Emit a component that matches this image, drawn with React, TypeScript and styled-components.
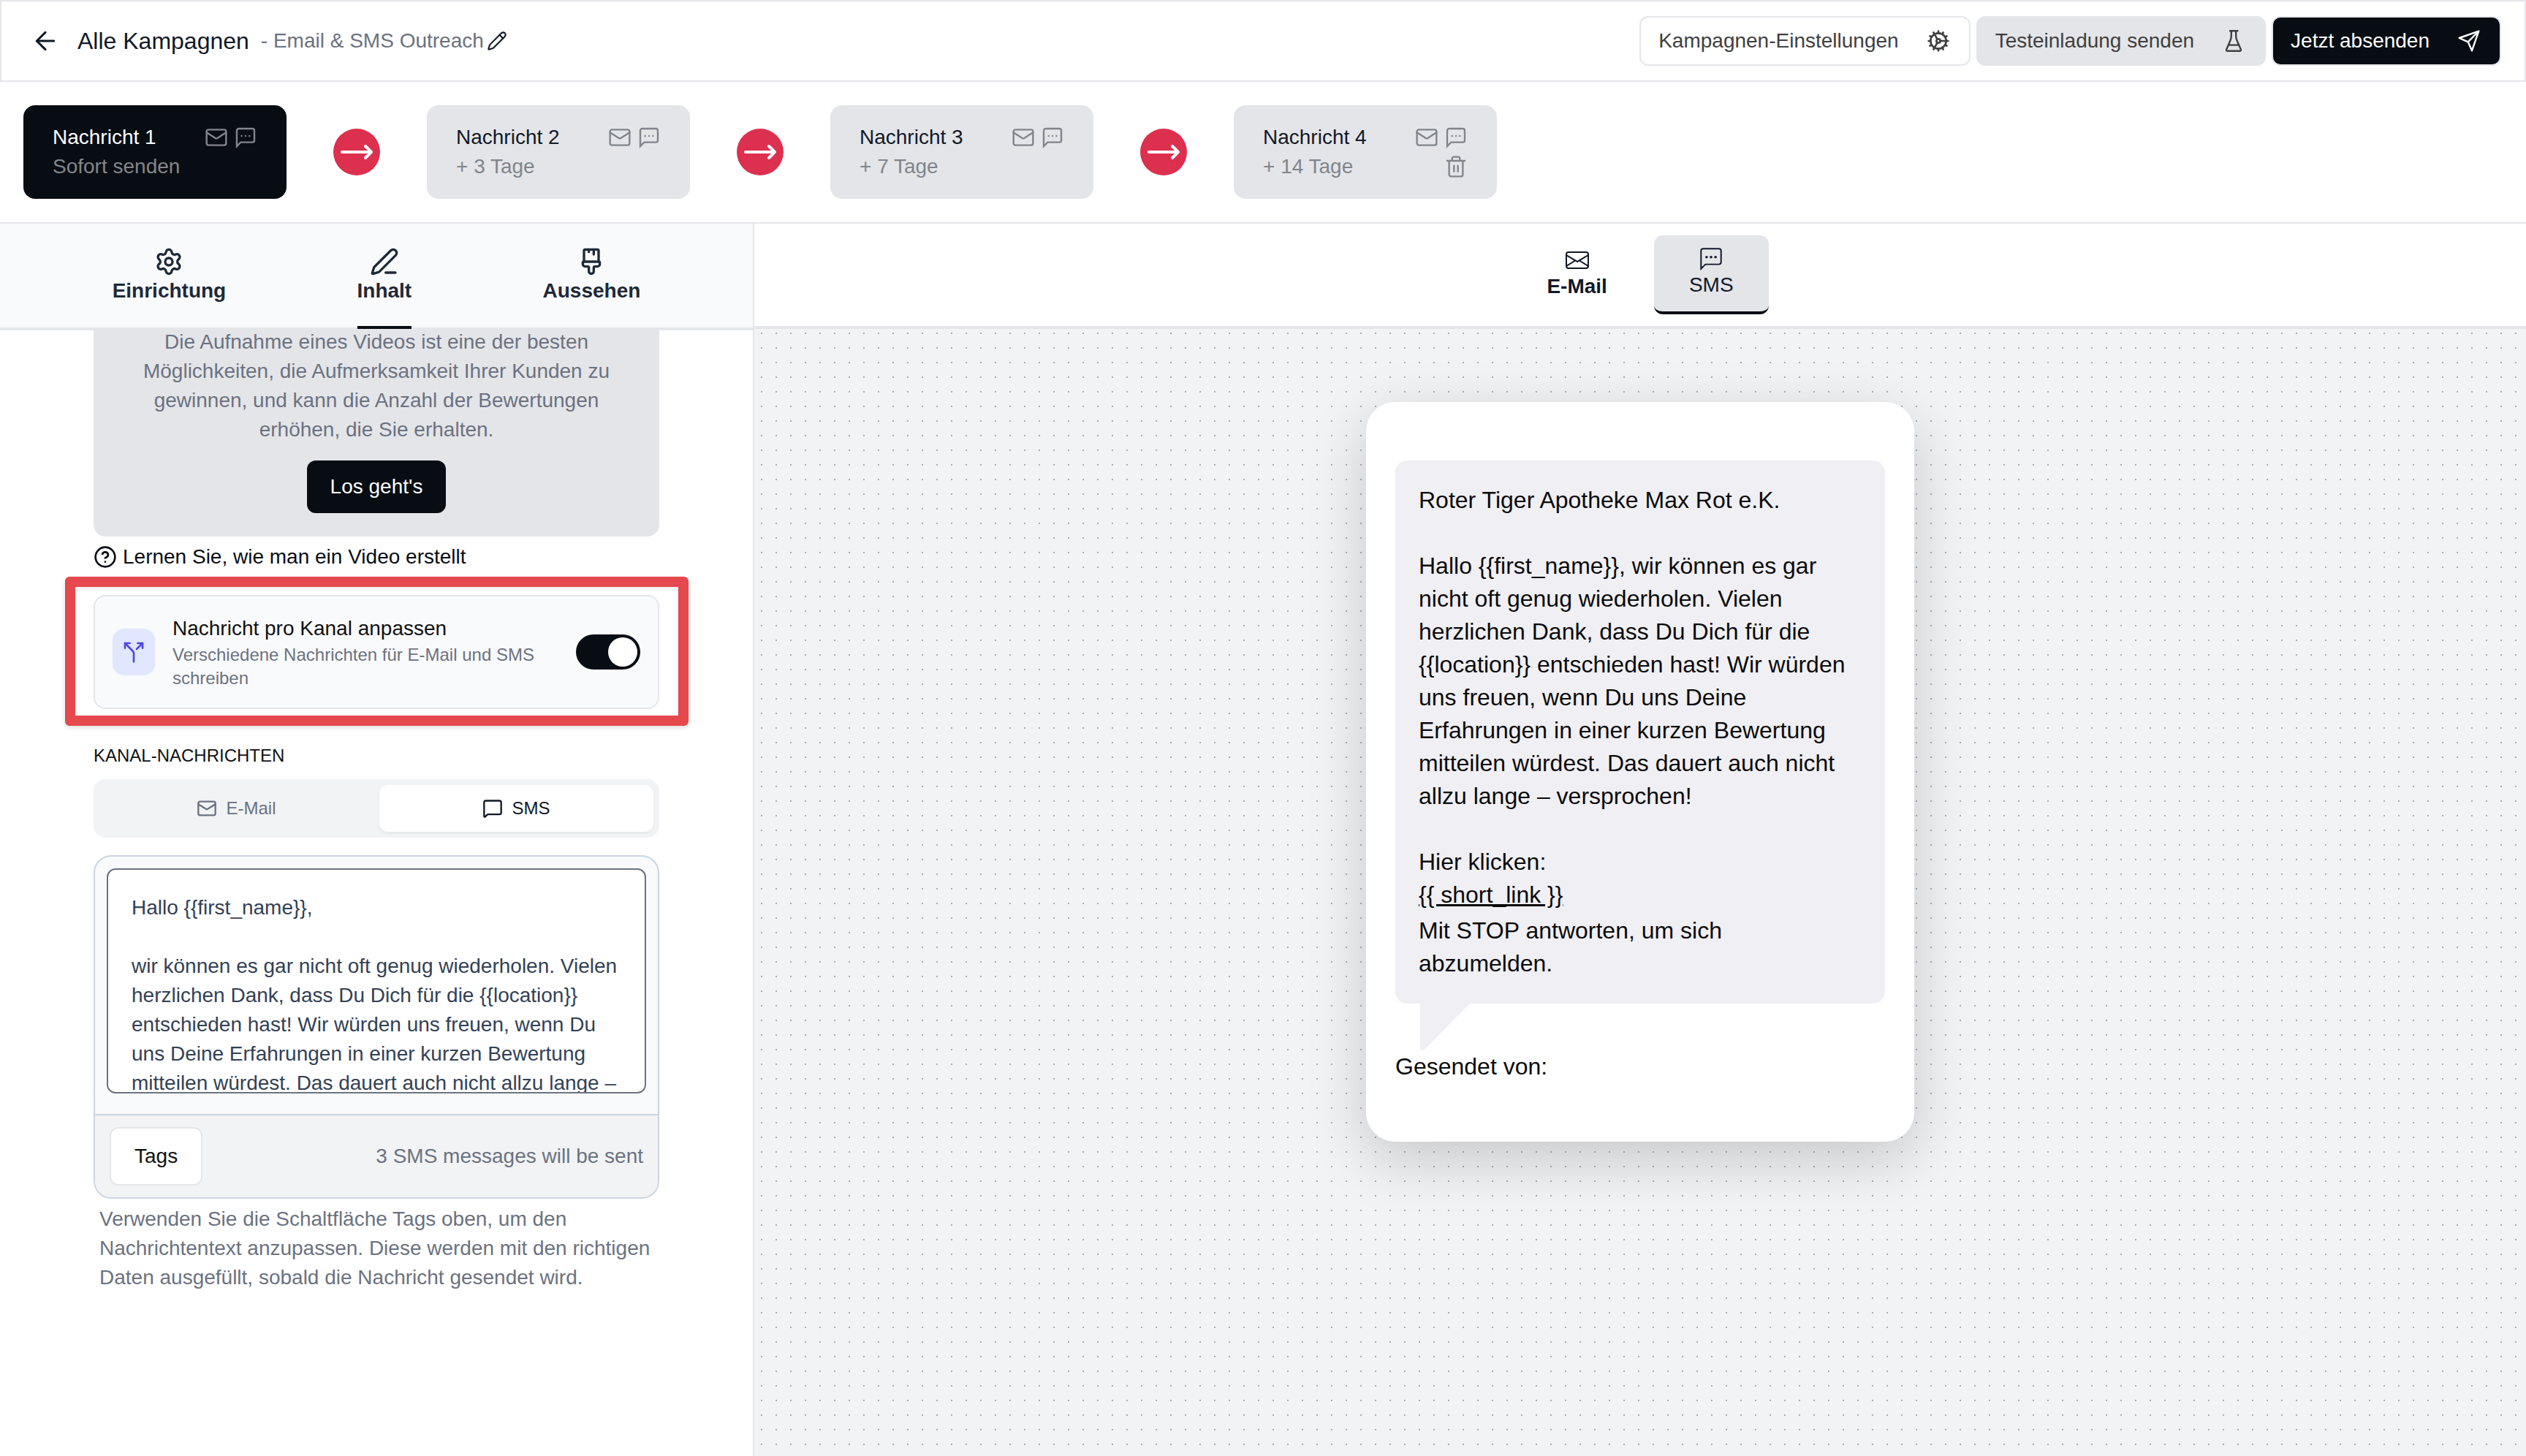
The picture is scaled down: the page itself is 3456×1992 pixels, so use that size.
import React, { useState } from "react";
import styled, { createGlobalStyle, css } from "styled-components";
import {
  ArrowLeft,
  CircleHelp,
  Cog,
  Mail,
  MessageSquare,
  PaintbrushVertical,
  Pencil,
  PenLine,
  Settings,
  Split,
} from "lucide-react";
import { BsEnvelope } from "react-icons/bs";

const color = {
  ink: "#080d14",
  text: "#111827",
  slate: "#1f2937",
  muted: "#6b7280",
  line: "#e5e6ea",
  fill: "#e4e5e9",
  soft: "#f2f3f5",
  pale: "#f9fafc",
  editorLine: "#cbd5e1",
  accent: "#dc304e",
  mark: "#e5484d",
};

const GlobalStyle = createGlobalStyle`
  *, *::before, *::after { box-sizing: border-box; }
  body {
    margin: 0;
    background: #fff;
    color: ${color.text};
    font-family: "Liberation Sans", Arial, Helvetica, sans-serif;
    font-size: 28px;
    line-height: 40px;
  }
  button, textarea, input { font: inherit; color: inherit; margin: 0; }
  button { background: none; border: 0; padding: 0; cursor: pointer; }
  p, h1, h2, h3 { margin: 0; font-size: inherit; font-weight: inherit; }
  svg { display: block; flex: none; }
`;

/* ---------- shared ---------- */

const Page = styled.div`
  display: flex;
  flex-direction: column;
  height: 100vh;
  overflow: hidden;
`;

const Button = styled.button<{ $tone: "plain" | "grey" | "dark" }>`
  display: flex;
  align-items: center;
  gap: 36px;
  height: 68px;
  padding: 0 24px;
  border: 2px solid ${color.line};
  border-radius: 12px;
  color: #404040;
  background: #fff;
  white-space: nowrap;
  ${(p) => p.$tone === "grey" && css`background: ${color.fill}; border-color: ${color.fill};`}
  ${(p) => p.$tone === "dark" && css`background: ${color.ink}; color: #fff;`}
`;

const IconSlot = styled.span`
  display: grid;
  place-items: center;
  width: 36px;
  height: 36px;
`;

/* ---------- header ---------- */

const Header = styled.header`
  display: flex;
  align-items: center;
  justify-content: space-between;
  flex: none;
  height: 112px;
  padding: 0 32px 0 40px;
  border: 2px solid ${color.line};
`;

const Crumbs = styled.div`
  display: flex;
  align-items: center;
  gap: 16px;
`;

const BackLink = styled.a`
  display: flex;
  align-items: center;
  gap: 24px;
  color: ${color.text};
  font-size: 32px;
  text-decoration: none;
`;

const CampaignName = styled.div`
  display: flex;
  align-items: center;
  gap: 4px;
  color: ${color.muted};
`;

const EditName = styled.button`
  color: ${color.text};
`;

const Actions = styled.div`
  display: flex;
  gap: 8px;
`;

/* ---------- message steps ---------- */

const Steps = styled.nav`
  display: flex;
  align-items: center;
  gap: 64px;
  flex: none;
  padding: 32px;
  border-bottom: 2px solid ${color.line};
`;

const StepCard = styled.div<{ $active: boolean }>`
  display: flex;
  justify-content: space-between;
  width: 360px;
  padding: 24px 40px;
  border-radius: 16px;
  background: ${(p) => (p.$active ? color.ink : color.fill)};
  color: ${(p) => (p.$active ? "#84868a" : "#80858c")};
`;

const StepButton = styled.button<{ $active: boolean }>`
  text-align: left;
  strong {
    display: block;
    font-weight: 400;
    color: ${(p) => (p.$active ? "#fff" : color.text)};
  }
`;

const StepIcons = styled.div`
  display: flex;
  flex-direction: column;
  align-items: flex-end;
  gap: 8px;
  padding-top: 4px;
`;

const IconPair = styled.div`
  display: flex;
  gap: 8px;
`;

const StepArrow = styled.span`
  display: grid;
  place-items: center;
  width: 64px;
  height: 64px;
  border-radius: 50%;
  background: ${color.accent};
  color: #fff;
`;

/* ---------- workspace ---------- */

const Workspace = styled.main`
  display: grid;
  grid-template-columns: 1032px minmax(0, 1fr);
  flex: 1;
  min-height: 0;
`;

const Sidebar = styled.section`
  display: flex;
  flex-direction: column;
  min-height: 0;
  border-right: 2px solid ${color.line};
`;

const TabBar = styled.div`
  display: flex;
  justify-content: space-around;
  flex: none;
  padding: 0 64px;
  background: ${color.pale};
  border-bottom: 4px solid ${color.line};
`;

const Tab = styled.button<{ $active: boolean }>`
  display: flex;
  flex-direction: column;
  align-items: center;
  margin-bottom: -2px;
  padding: 32px 0 28px;
  border-bottom: 4px solid ${(p) => (p.$active ? color.ink : "transparent")};
  color: ${color.slate};
  font-weight: 700;
`;

const SidebarBody = styled.div`
  flex: 1;
  min-height: 0;
  padding: 0 128px;
  overflow: hidden;
`;

const VideoCard = styled.div`
  display: flex;
  flex-direction: column;
  align-items: center;
  gap: 22px;
  margin-top: -40px;
  padding: 36px 56px 32px;
  border-radius: 16px;
  background: ${color.fill};
  color: ${color.muted};
  text-align: center;
`;

const StartButton = styled.button`
  height: 72px;
  padding: 0 32px;
  border-radius: 12px;
  background: ${color.ink};
  color: #fff;
`;

const HelpLink = styled.a`
  display: flex;
  align-items: center;
  gap: 8px;
  margin-top: 8px;
  color: ${color.ink};
  text-decoration: none;
`;

const Highlight = styled.div`
  position: relative;
  margin-top: 32px;
  &::after {
    content: "";
    position: absolute;
    inset: -25px -40px -23px -39px;
    border: 14px solid ${color.mark};
    border-radius: 6px;
    box-shadow: 0 2px 6px rgba(0, 0, 0, 0.15), inset 0 2px 6px rgba(0, 0, 0, 0.1);
    pointer-events: none;
  }
`;

const ToggleCard = styled.label`
  display: flex;
  align-items: center;
  gap: 24px;
  padding: 24px;
  border: 2px solid ${color.line};
  border-radius: 16px;
  background: ${color.pale};
`;

const Badge = styled.span`
  display: grid;
  place-items: center;
  flex: none;
  width: 58px;
  height: 64px;
  border-radius: 16px;
  background: #e0e7ff;
  color: #4f46e5;
`;

const ToggleText = styled.span`
  flex: 1;
  color: #111;
  small {
    display: block;
    color: ${color.muted};
    font-size: 24px;
    line-height: 32px;
  }
`;

const Switch = styled.input`
  appearance: none;
  flex: none;
  width: 88px;
  height: 48px;
  padding: 4px;
  border-radius: 24px;
  background: ${color.muted};
  &::before {
    content: "";
    display: block;
    width: 40px;
    height: 40px;
    border-radius: 50%;
    background: #fff;
  }
  &:checked { background: ${color.ink}; }
  &:checked::before { margin-left: auto; }
`;

const SectionLabel = styled.h2`
  margin: 48px 0 16px;
  color: #111;
  font-size: 24px;
  line-height: 32px;
  text-transform: uppercase;
`;

const Segments = styled.div`
  display: grid;
  grid-template-columns: 1fr 1fr;
  gap: 8px;
  padding: 8px;
  border-radius: 16px;
  background: ${color.soft};
`;

const Segment = styled.button<{ $active: boolean }>`
  display: flex;
  align-items: center;
  justify-content: center;
  gap: 12px;
  height: 64px;
  border-radius: 12px;
  color: ${color.muted};
  font-size: 24px;
  ${(p) =>
    p.$active &&
    css`
      background: #fff;
      color: ${color.text};
      box-shadow: 0 2px 4px rgba(0, 0, 0, 0.06);
    `}
`;

const Editor = styled.div`
  margin-top: 24px;
  border: 2px solid ${color.editorLine};
  border-radius: 24px;
  background: ${color.pale};
  overflow: hidden;
`;

const EditorBody = styled.div`
  padding: 16px 16px 28px;
  border-bottom: 2px solid ${color.editorLine};
`;

const MessageInput = styled.textarea`
  display: block;
  width: 100%;
  height: 308px;
  padding: 32px;
  border: 2px solid ${color.muted};
  border-radius: 12px;
  outline: 0;
  background: #fff;
  color: #334155;
  resize: none;
  overflow: hidden;
`;

const EditorFooter = styled.div`
  display: flex;
  align-items: center;
  justify-content: space-between;
  padding: 16px 20px;
  background: ${color.soft};
  color: ${color.muted};
`;

const TagsButton = styled.button`
  height: 80px;
  padding: 0 32px;
  border: 2px solid ${color.line};
  border-radius: 12px;
  background: #fff;
  color: #111;
`;

const Hint = styled.p`
  margin-top: 8px;
  padding: 0 8px;
  color: ${color.muted};
`;

/* ---------- preview ---------- */

const Preview = styled.section`
  display: flex;
  flex-direction: column;
  min-width: 0;
  min-height: 0;
`;

const ChannelBar = styled.div`
  display: flex;
  align-items: center;
  justify-content: center;
  gap: 16px;
  flex: none;
  height: 144px;
  border-bottom: 4px solid ${color.line};
`;

const Channel = styled.button<{ $active: boolean }>`
  display: flex;
  flex-direction: column;
  align-items: center;
  padding: 16px 48px;
  color: ${color.text};
  font-weight: 700;
  ${(p) =>
    p.$active &&
    css`
      border-bottom: 4px solid ${color.ink};
      border-radius: 12px;
      background: ${color.fill};
      font-weight: 400;
    `}
`;

const Canvas = styled.div`
  flex: 1;
  min-height: 0;
  padding: 100px 0;
  background-color: ${color.soft};
  background-image: radial-gradient(circle, #a9acb1 1px, transparent 1px);
  background-size: 20px 20px;
  background-position: 0 -4px;
  overflow: hidden;
`;

const Phone = styled.article`
  width: 750px;
  margin: 0 auto;
  padding: 80px 40px;
  border-radius: 40px;
  background: #fff;
  box-shadow: 0 24px 80px rgba(0, 0, 0, 0.18);
  color: #0a0a0a;
  font-size: 32px;
  line-height: 45px;
`;

const Bubble = styled.div`
  padding: 32px;
  border-radius: 16px;
  background: #f0eff4;
  white-space: pre-line;
`;

const ShortLink = styled.a`
  color: inherit;
`;

const StopNote = styled.p`
  margin-top: 4px;
`;

const Tail = styled.svg`
  margin-left: 34px;
  fill: #f0eff4;
`;

/* ---------- drawings ---------- */

const ChatIcon = ({ large = false }: { large?: boolean }) => (
  <svg
    width="32"
    height="32"
    viewBox={large ? "1.5 1.5 21 21" : "0 0 24 24"}
    fill="none"
    stroke="currentColor"
    strokeWidth={large ? 1.3 : 1.8}
    aria-hidden
  >
    <path d="M21 15a2 2 0 0 1-2 2H7l-4 4V5a2 2 0 0 1 2-2h14a2 2 0 0 1 2 2z" />
    <g fill="currentColor" stroke="none">
      <circle cx="8" cy="10.5" r={large ? 1.2 : 0.9} />
      <circle cx="12" cy="10.5" r={large ? 1.2 : 0.9} />
      <circle cx="16" cy="10.5" r={large ? 1.2 : 0.9} />
    </g>
  </svg>
);

const TrashIcon = () => (
  <svg width="32" height="32" viewBox="0 0 24 24" fill="none" stroke="currentColor" strokeWidth="1.8" strokeLinecap="round" aria-hidden>
    <path d="M3 6h18M19 6v14a2 2 0 0 1-2 2H7a2 2 0 0 1-2-2V6M8 6V4a2 2 0 0 1 2-2h4a2 2 0 0 1 2 2v2M10 11v6M14 11v6" />
  </svg>
);

const FlaskIcon = () => (
  <svg width="36" height="36" viewBox="0 0 36 36" fill="none" stroke="currentColor" strokeWidth="2.4" strokeLinejoin="round" aria-hidden>
    <path d="M12 4.2h12.4M14.8 4.2v7.6c0 3-1 5-2 7.2L8.2 29.6c-.5 1.4.2 2.2 1.6 2.2h16.4c1.4 0 2.1-.8 1.6-2.2L23.2 19c-1-2.200-2-4.200-2-7.200V4.200M11.500 23.600h13" />
  </svg>
);

const PlaneIcon = () => (
  <svg width="32" height="32" viewBox="0 0 24 24" fill="none" stroke="currentColor" strokeWidth="1.8" strokeLinejoin="round" aria-hidden>
    <path d="M22 2l-7 20-4-9-9-4zM22 2L11 13" />
  </svg>
);

const StepArrowIcon = () => (
  <svg width="48" height="24" viewBox="0 0 48 24" fill="none" stroke="currentColor" strokeWidth="4" strokeLinecap="round" strokeLinejoin="round" aria-hidden>
    <path d="M4 12h40M36 4l8 8-8 8" />
  </svg>
);

/* ---------- data ---------- */

const steps = [
  { name: "Nachricht 1", delay: "Sofort senden" },
  { name: "Nachricht 2", delay: "+ 3 Tage" },
  { name: "Nachricht 3", delay: "+ 7 Tage" },
  { name: "Nachricht 4", delay: "+ 14 Tage" },
];

const body =
  "wir können es gar nicht oft genug wiederholen. Vielen herzlichen Dank, dass Du Dich für die {{location}} entschieden hast! Wir würden uns freuen, wenn Du uns Deine Erfahrungen in einer kurzen Bewertung mitteilen würdest. Das dauert auch nicht allzu lange – versprochen!";

export default function App() {
  const [step, setStep] = useState(0);
  const [tab, setTab] = useState("Inhalt");
  const [perChannel, setPerChannel] = useState(true);
  const [channel, setChannel] = useState("SMS");
  const [message, setMessage] = useState(`Hallo {{first_name}},\n\n${body}`);

  const tabs = [
    { name: "Einrichtung", icon: <Settings size={40} strokeWidth={2} /> },
    { name: "Inhalt", icon: <PenLine size={40} strokeWidth={2} /> },
    { name: "Aussehen", icon: <PaintbrushVertical size={40} strokeWidth={2} /> },
  ];

  return (
    <Page>
      <GlobalStyle />
      <Header>
        <Crumbs>
          <BackLink href="#kampagnen">
            <ArrowLeft size={40} strokeWidth={1.8} />
            Alle Kampagnen
          </BackLink>
          <CampaignName>
            <span>- Email &amp; SMS Outreach</span>
            <EditName aria-label="Namen bearbeiten">
              <Pencil size={28} strokeWidth={1.8} />
            </EditName>
          </CampaignName>
        </Crumbs>
        <Actions>
          <Button $tone="plain">
            Kampagnen-Einstellungen
            <IconSlot><Cog size={32} strokeWidth={2} /></IconSlot>
          </Button>
          <Button $tone="grey">
            Testeinladung senden
            <IconSlot><FlaskIcon /></IconSlot>
          </Button>
          <Button $tone="dark">
            Jetzt absenden
            <IconSlot><PlaneIcon /></IconSlot>
          </Button>
        </Actions>
      </Header>

      <Steps>
        {steps.map((s, i) => (
          <React.Fragment key={s.name}>
            {i > 0 && <StepArrow><StepArrowIcon /></StepArrow>}
            <StepCard $active={i === step}>
              <StepButton $active={i === step} onClick={() => setStep(i)}>
                <strong>{s.name}</strong>
                {s.delay}
              </StepButton>
              <StepIcons>
                <IconPair>
                  <Mail size={32} strokeWidth={1.8} />
                  <ChatIcon />
                </IconPair>
                {i === steps.length - 1 && (
                  <button aria-label="Nachricht löschen"><TrashIcon /></button>
                )}
              </StepIcons>
            </StepCard>
          </React.Fragment>
        ))}
      </Steps>

      <Workspace>
        <Sidebar>
          <TabBar role="tablist">
            {tabs.map((t) => (
              <Tab key={t.name} role="tab" aria-selected={t.name === tab} $active={t.name === tab} onClick={() => setTab(t.name)}>
                {t.icon}
                {t.name}
              </Tab>
            ))}
          </TabBar>
          <SidebarBody>
            <VideoCard>
              <p>
                Die Aufnahme eines Videos ist eine der besten Möglichkeiten, die Aufmerksamkeit Ihrer Kunden zu
                gewinnen, und kann die Anzahl der Bewertungen erhöhen, die Sie erhalten.
              </p>
              <StartButton>Los geht's</StartButton>
            </VideoCard>
            <HelpLink href="#video">
              <CircleHelp size={32} strokeWidth={2} />
              Lernen Sie, wie man ein Video erstellt
            </HelpLink>

            <Highlight>
              <ToggleCard>
                <Badge><Split size={32} strokeWidth={2} /></Badge>
                <ToggleText>
                  Nachricht pro Kanal anpassen
                  <small>Verschiedene Nachrichten für E-Mail und SMS schreiben</small>
                </ToggleText>
                <Switch type="checkbox" role="switch" checked={perChannel} onChange={(e) => setPerChannel(e.target.checked)} />
              </ToggleCard>
            </Highlight>

            <SectionLabel>Kanal-Nachrichten</SectionLabel>
            <Segments>
              <Segment $active={channel === "E-Mail"} onClick={() => setChannel("E-Mail")}>
                <Mail size={28} strokeWidth={2} />
                E-Mail
              </Segment>
              <Segment $active={channel === "SMS"} onClick={() => setChannel("SMS")}>
                <MessageSquare size={28} strokeWidth={2} />
                SMS
              </Segment>
            </Segments>

            <Editor>
              <EditorBody>
                <MessageInput aria-label="SMS-Nachricht" spellCheck={false} value={message} onChange={(e) => setMessage(e.target.value)} />
              </EditorBody>
              <EditorFooter>
                <TagsButton>Tags</TagsButton>
                <span>3 SMS messages will be sent</span>
              </EditorFooter>
            </Editor>
            <Hint>
              Verwenden Sie die Schaltfläche Tags oben, um den Nachrichtentext anzupassen. Diese werden mit den
              richtigen Daten ausgefüllt, sobald die Nachricht gesendet wird.
            </Hint>
          </SidebarBody>
        </Sidebar>

        <Preview>
          <ChannelBar>
            <Channel $active={channel === "E-Mail"} onClick={() => setChannel("E-Mail")}>
              <BsEnvelope size={32} />
              E-Mail
            </Channel>
            <Channel $active={channel === "SMS"} onClick={() => setChannel("SMS")}>
              <ChatIcon large />
              SMS
            </Channel>
          </ChannelBar>
          <Canvas>
            <Phone>
              <Bubble>
                <p>{`Roter Tiger Apotheke Max Rot e.K.\n\nHallo {{first_name}}, ${body}\n\nHier klicken:`}</p>
                <ShortLink href="#link">{"{{ short_link }}"}</ShortLink>
                <StopNote>{"Mit STOP antworten, um sich\nabzumelden."}</StopNote>
              </Bubble>
              <Tail width="70" height="64" viewBox="0 0 70 64" aria-hidden>
                <path d="M0 0h70q-3 1-6 4L8 61q-3 3-5 3-3 0-3-4z" />
              </Tail>
              <p>Gesendet von:</p>
            </Phone>
          </Canvas>
        </Preview>
      </Workspace>
    </Page>
  );
}
